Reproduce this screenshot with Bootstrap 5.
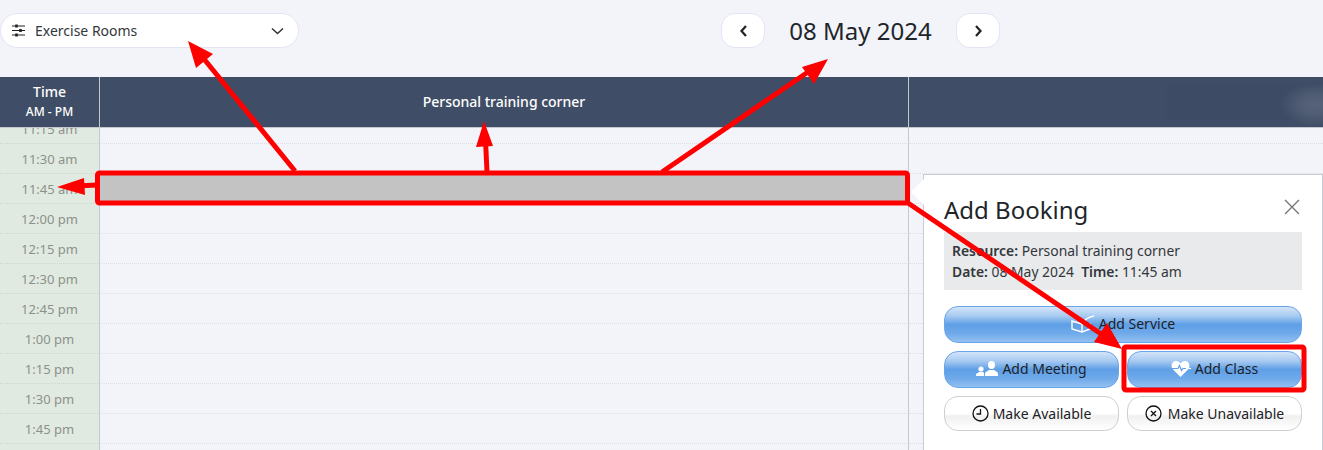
<!DOCTYPE html>
<html lang="en">

<head>
    <meta charset="UTF-8">
    <meta name="viewport" content="width=device-width, initial-scale=1.0">
    <title>Add Booking</title>
    <link href="https://cdn.jsdelivr.net/npm/bootstrap@5.3.2/dist/css/bootstrap.min.css" rel="stylesheet">
    <style>
        html, body {
            height: 450px;
            overflow: hidden;
        }

        body {
            background-color: #f3f4fa;
            font-family: "Noto Sans", "Open Sans", sans-serif;
            color: #212529;
            position: relative;
        }

        .top-bar {
            height: 77px;
            padding-top: 13px;
        }

        .room-picker {
            width: 299px;
            height: 35px;
            background: #fff;
            border: 1px solid #e3e4f6;
            border-radius: 18px;
            padding: 0 10px 0 11px;
            font-size: 14px;
            color: #33373b;
        }

        .room-name {
            margin-left: 10px;
        }

        .date-nav {
            margin-left: 422px;
        }

        .nav-arrow {
            width: 44px;
            height: 35px;
            background: #fff;
            border: 1px solid #e3e4f6;
            border-radius: 14px;
        }

        .date-label {
            width: 191px;
            font-size: 24px;
            line-height: 35px;
            text-align: center;
        }

        .head-row {
            height: 51px;
            background: #3f4e66;
            color: #fff;
            border-bottom: 1px solid #c5c8cf;
            position: relative;
            overflow: hidden;
        }

        .time-col {
            width: 100px;
            flex: none;
            border-right: 1px solid #c5c8cf;
        }

        .res-col {
            width: 809px;
            flex: none;
            border-right: 1px solid #c5c8cf;
        }

        .head-time {
            font-size: 14px;
            font-weight: 500;
            line-height: 17px;
            padding-top: 6px;
        }

        .head-time small {
            display: block;
            font-size: 12px;
            line-height: 17px;
            margin-top: 3px;
        }

        .head-res {
            font-size: 14px;
            font-weight: 500;
            line-height: 50px;
        }

        /* the blurred out second resource name */
        .blur-name {
            position: absolute;
            left: 1167px;
            top: 8px;
            width: 156px;
            height: 35px;
            background: #3d4b64;
            filter: blur(1px);
        }

        .blur-glow {
            position: absolute;
            left: 1280px;
            top: 6px;
            width: 70px;
            height: 44px;
            background: radial-gradient(closest-side, #57637a 0, #4f5c74 45%, rgba(63, 78, 102, 0) 100%);
        }

        .grid-area {
            height: 322px;
            overflow: hidden;
        }

        .slot-list {
            margin-top: -14px;
        }

        .slot-row {
            height: 30px;
        }

        .slot-row .time-col {
            background: #e1eae0;
            color: #8c918c;
            font-size: 13px;
            line-height: 30px;
            text-align: center;
            border-bottom: 1px dotted #d0d6ce;
        }

        .slot-row .res-col,
        .slot-row .rest-col {
            border-bottom: 1px dotted #dcdde4;
        }

        .rest-col {
            flex: 1;
        }

        .slot-picked {
            position: absolute;
            left: 100px;
            top: 174px;
            width: 808px;
            height: 30px;
            background: #c3c3c3;
        }

        .booking-pop {
            position: absolute;
            left: 923px;
            top: 174px;
            width: 400px;
            height: 290px;
            background: #fff;
            border: 1px solid #c9cbd2;
            padding: 19px 20px 0;
        }

        .booking-pop::before {
            content: "";
            position: absolute;
            left: -13px;
            top: 4px;
            border-style: solid;
            border-width: 13px 13px 13px 0;
            border-color: transparent #fff transparent transparent;
        }

        .pop-title {
            font-size: 24px;
            line-height: 32px;
            font-weight: 400;
            margin: 0;
        }

        .pop-close {
            position: absolute;
            right: 22px;
            top: 24px;
            width: 16px;
            height: 16px;
            display: block;
        }

        .pop-info {
            background: #e9eaec;
            margin-top: 6px;
            height: 58px;
            padding: 8px;
            font-size: 13.9px;
            line-height: 21px;
            color: #33373b;
        }

        .pop-info b {
            font-weight: 600;
        }

        .pop-actions {
            margin-top: 16px;
            width: 358px;
        }

        .gel-btn {
            height: 37px;
            border-radius: 14px;
            font-size: 14px;
            color: #1d2126;
            border: 1px solid #6aa5ea;
            padding: 0 6px 2px;
            gap: 4px;
            background: linear-gradient(#d3e4f8 0, #a9cbf1 25%, #5f9fe6 50%, #6ea9ea 75%, #93c0f0 100%);
            flex: 1 1 0;
        }

        .gel-btn.plain {
            height: 35px;
            padding-bottom: 0;
            border-color: #cfcfcf;
            background: linear-gradient(#fff 0, #fff 50%, #f0f0f0 58%, #fff 100%);
        }

        .gel-btn.wide-gap {
            gap: 6px;
        }

        .marks {
            position: absolute;
            left: 0;
            top: 0;
            width: 1323px;
            height: 450px;
            pointer-events: none;
        }
    </style>
</head>

<body>
    <div class="top-bar d-flex align-items-start">
        <div class="room-picker d-flex align-items-center">
            <svg width="13" height="13" viewBox="0 0 13 13" fill="none" stroke="#222" stroke-width="1.1">
                <path d="M0 2h13M0 6.500h13M0 11h13" />
                <path d="M4.500 .5v3M8.500 5v3M4.500 9.500v3" stroke-width="2.600" />
            </svg>
            <span class="room-name flex-grow-1">Exercise Rooms</span>
            <svg class="me-1" width="13" height="8" viewBox="0 0 13 8" fill="none" stroke="#333" stroke-width="1.5">
                <path d="M1 1.500l5.500 5 5.500-5" />
            </svg>
        </div>
        <div class="date-nav d-flex">
            <div class="nav-arrow d-flex align-items-center justify-content-center">
                <svg width="9" height="12" viewBox="0 0 9 12" fill="none" stroke="#222" stroke-width="2.200">
                    <path d="M7 1L2.500 6 7 11" />
                </svg>
            </div>
            <div class="date-label">08 May 2024</div>
            <div class="nav-arrow d-flex align-items-center justify-content-center">
                <svg width="9" height="12" viewBox="0 0 9 12" fill="none" stroke="#222" stroke-width="2.200">
                    <path d="M2 1l4.500 5L2 11" />
                </svg>
            </div>
        </div>
    </div>

    <div class="head-row d-flex">
        <div class="time-col head-time text-center">Time<small>AM - PM</small></div>
        <div class="res-col head-res text-center">Personal training corner</div>
        <div class="blur-name"></div>
        <div class="blur-glow"></div>
    </div>

    <div class="grid-area">
        <div class="slot-list" id="slotList"></div>
    </div>

    <div class="slot-picked"></div>

    <div class="booking-pop">
        <h4 class="pop-title">Add Booking</h4>
        <svg class="pop-close" viewBox="0 0 16 16" fill="none" stroke="#777" stroke-width="1.400">
            <path d="M1 1l14 14M15 1L1 15" />
        </svg>
        <div class="pop-info">
            <div><b>Resource:</b> Personal training corner</div>
            <div><b>Date:</b> 08 May 2024 &nbsp;<b>Time:</b> 11:45 am</div>
        </div>
        <div class="pop-actions d-flex flex-column">
            <div class="d-flex">
                <button class="gel-btn d-flex align-items-center justify-content-center">
                    <svg width="24" height="19" viewBox="0 0 24 19" fill="none" stroke="#fff" stroke-width="1.400">
                        <path d="M1 7l10 3v8L1 15zM11 10C13 6 18 3 23 2M11 18l8-3V9" />
                    </svg>
                    <span>Add Service</span>
                </button>
            </div>
            <div class="d-flex gap-2 mt-2">
                <button class="gel-btn d-flex align-items-center justify-content-center">
                    <svg width="22" height="15" viewBox="0 0 22 15" fill="#fff">
                        <ellipse cx="15.500" cy="4" rx="3.500" ry="4" />
                        <path d="M9 15v-2.500c0-1.500 3-2.500 4-3.500h5c1 1 4 2 4 3.500V15z" />
                        <circle cx="5" cy="8" r="2.600" />
                        <path d="M0 15v-1.500c0-1 2-1.500 3-2.500h4c.5.5 1 .8 1 1v3z" />
                    </svg>
                    <span>Add Meeting</span>
                </button>
                <button class="gel-btn d-flex align-items-center justify-content-center">
                    <svg width="20" height="17" viewBox="0 0 20 17">
                        <path fill="#fff" d="M9.500 17L2 9.500C-1 6 1 1 5 1c2 0 3.500 1 4.500 2.500C10.500 2 12 1 14 1c4 0 6 5 3 8.500z" />
                        <path fill="none" stroke="#5f9fe6" stroke-width="1.200" d="M0 8.500h7l1.500-3 2 5 1.500-2h3" />
                        <path fill="none" stroke="#fff" stroke-width="1.200" d="M15 8.500h5" />
                    </svg>
                    <span>Add Class</span>
                </button>
            </div>
            <div class="d-flex gap-2 mt-2">
                <button class="gel-btn plain d-flex align-items-center justify-content-center">
                    <svg width="17" height="17" viewBox="0 0 17 17" fill="none" stroke="#111" stroke-width="1.300">
                        <circle cx="8.500" cy="8.500" r="7.500" />
                        <path d="M8.500 4v5H4.500" />
                    </svg>
                    <span>Make Available</span>
                </button>
                <button class="gel-btn plain wide-gap d-flex align-items-center justify-content-center">
                    <svg width="17" height="17" viewBox="0 0 17 17" fill="none" stroke="#111" stroke-width="1.300">
                        <circle cx="8.500" cy="8.500" r="7.500" />
                        <path d="M6 6l5 5M11 6l-5 5" />
                    </svg>
                    <span>Make Unavailable</span>
                </button>
            </div>
        </div>
    </div>

    <!-- red annotations drawn over the screenshot -->
    <svg class="marks" viewBox="0 0 1323 450" fill="none" stroke="#f00" stroke-width="5">
        <rect x="97.500" y="173" width="810" height="30" rx="2" />
        <rect x="1124" y="347" width="180" height="43" rx="2" />
        <path d="M295 171L204 59M487 172L485.500 140M662 172L808 72M97 185L76 186M908 203L1110 340" />
        <path fill="#f00" stroke="none" d="M188 41l25 13-17 14zM484 121l9 25-17 1zM828 59l-14 25-12-17zM57 187l27-9 1 17zM1122 349l-28-7 13-19z" />
    </svg>

    <script>
        // build the 15 minute slots
        const slots = ['11:15 am', '11:30 am', '11:45 am', '12:00 pm', '12:15 pm', '12:30 pm', '12:45 pm',
            '1:00 pm', '1:15 pm', '1:30 pm', '1:45 pm', '2:00 pm'];
        const slotList = document.getElementById('slotList');
        slots.forEach(label => {
            const row = document.createElement('div');
            row.className = 'slot-row d-flex';
            row.innerHTML = `
                <div class="time-col">${label}</div>
                <div class="res-col"></div>
                <div class="rest-col"></div>
            `;
            slotList.appendChild(row);
        });
    </script>
    <script src="https://cdn.jsdelivr.net/npm/bootstrap@5.3.2/dist/js/bootstrap.bundle.min.js"></script>
</body>

</html>
